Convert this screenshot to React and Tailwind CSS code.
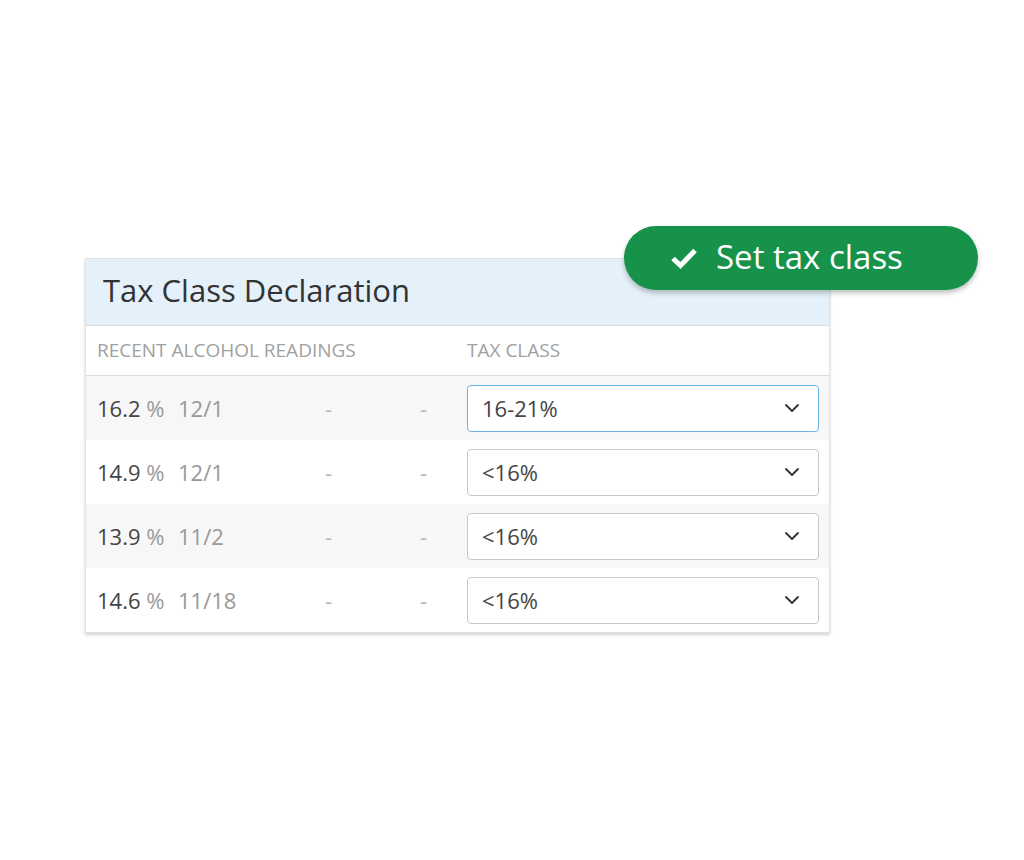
import React from "react";

const rows = [
  { v: "16.2", d: "12/1", cls: "16-21%", active: true, bg: "bg-[#f7f7f7]" },
  { v: "14.9", d: "12/1", cls: "<16%", bg: "bg-white" },
  { v: "13.9", d: "11/2", cls: "<16%", bg: "bg-[#f7f7f7]" },
  { v: "14.6", d: "11/18", cls: "<16%", bg: "bg-white" },
];

function Chevron() {
  return (
    <svg width="16" height="10" viewBox="0 0 16 10" fill="none">
      <path d="M2 2l6 6 6-6" stroke="#333" strokeWidth="1.8" strokeLinecap="round" strokeLinejoin="round" />
    </svg>
  );
}

export default function App() {
  return (
    <div
      className="relative w-[1024px] h-[860px] bg-white overflow-hidden"
      style={{ fontFamily: '"Open Sans", "Noto Sans", sans-serif' }}
    >
      <div className="pt-[258px] pl-[85px]">
        <div className="w-[745px] border border-[#e2e2e2] bg-white shadow-[0_2px_3px_rgba(0,0,0,0.18)]">
          <div className="h-[67px] bg-[#e4f1fa] border-b border-[#dcdcdc] flex items-center pl-[17px]">
            <h1 className="text-[31px] text-[#333] leading-none -mt-[3px]">Tax Class Declaration</h1>
          </div>
          <div className="h-[50px] flex items-center border-b border-[#dcdcdc] text-[19px] text-[#a0a0a0] uppercase">
            <div className="pl-[11px] w-[381px] whitespace-nowrap">Recent Alcohol Readings</div>
            <div>Tax Class</div>
          </div>
          {rows.map((r, i) => (
            <div key={i} className={`h-[64px] flex items-center ${r.bg}`}>
              <div className="pl-[11px] w-[92px] text-[22px] text-[#444] whitespace-nowrap">
                {r.v} <span className="text-[#999]">%</span>
              </div>
              <div className="w-[147px] text-[22px] text-[#999]">{r.d}</div>
              <div className="w-[95px] text-[22px] text-[#b5b5b5]">-</div>
              <div className="w-[47px] text-[22px] text-[#b5b5b5]">-</div>
              <div
                className={`w-[352px] h-[47px] rounded-[4px] bg-white flex items-center justify-between pl-[14px] pr-[18px] border ${
                  r.active ? "border-[#6db3e8]" : "border-[#c8c8c8]"
                }`}
              >
                <span className="text-[22px] text-[#444]">{r.cls}</span>
                <Chevron />
              </div>
            </div>
          ))}
        </div>
      </div>

      <div className="absolute left-[624px] top-[226px] w-[354px] h-[64px] rounded-full bg-[#16924a] shadow-[0_3px_5px_rgba(0,0,0,0.25)] flex items-center pl-[46px] gap-[18px]">
        <svg width="28" height="22" viewBox="0 0 28 22">
          <path d="M3 11.5l7.5 7L25 3.5" stroke="white" strokeWidth="5" fill="none" strokeLinejoin="miter" />
        </svg>
        <span className="text-[33px] text-white leading-none -mt-[3px]">Set tax class</span>
      </div>
    </div>
  );
}
